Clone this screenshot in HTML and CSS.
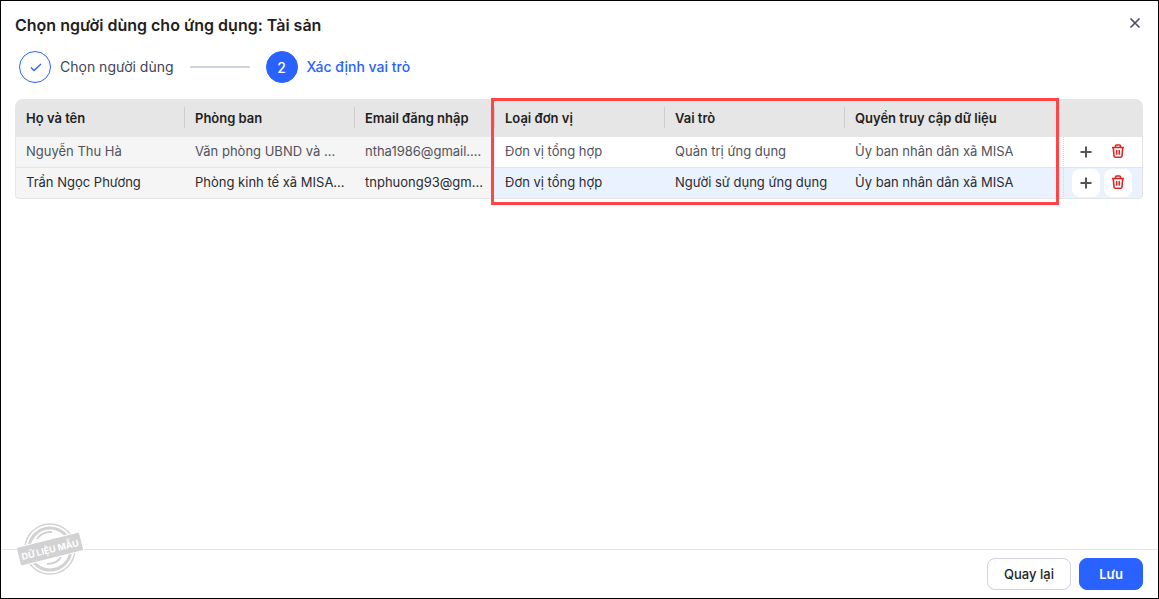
FILE: index.html
```html
<!DOCTYPE html>
<html lang="vi">
<head>
    <meta charset="UTF-8">
    <meta name="viewport" content="width=device-width, initial-scale=1.0">
    <title>Chọn người dùng cho ứng dụng: Tài sản</title>
    <link rel="stylesheet" href="styles.css">
</head>
<body>

    <div class="dialog">
        <header class="dialog-header">
            <h1>Chọn người dùng cho ứng dụng: Tài sản</h1>
            <button class="close-btn" type="button" aria-label="Đóng">
                <svg width="12" height="12" viewBox="0 0 12 12"><path d="M1.5 1.5l9 9M10.5 1.5l-9 9"/></svg>
            </button>
        </header>

        <ol class="steps">
            <li class="step done">
                <span class="step-circle">
                    <svg width="14" height="12" viewBox="0 0 14 12"><path d="M3 6.5l3 3L13 3"/></svg>
                </span>
                <span class="step-label">Chọn người dùng</span>
            </li>
            <li class="step-line" aria-hidden="true"></li>
            <li class="step active">
                <span class="step-circle">2</span>
                <span class="step-label">Xác định vai trò</span>
            </li>
        </ol>

        <main class="dialog-body">
            <div class="table-wrap">
                <table class="user-table">
                    <colgroup>
                        <col class="col-name">
                        <col class="col-dept">
                        <col class="col-email">
                        <col class="col-unit">
                        <col class="col-role">
                        <col>
                        <col class="col-actions">
                    </colgroup>
                    <thead>
                        <tr>
                            <th>Họ và tên</th>
                            <th>Phòng ban</th>
                            <th>Email đăng nhập</th>
                            <th>Loại đơn vị</th>
                            <th>Vai trò</th>
                            <th>Quyền truy cập dữ liệu</th>
                            <th></th>
                        </tr>
                    </thead>
                    <tbody>
                        <tr>
                            <td class="locked">Nguyễn Thu Hà</td>
                            <td class="locked">Văn phòng UBND và ...</td>
                            <td class="locked">ntha1986@gmail....</td>
                            <td>Đơn vị tổng hợp</td>
                            <td>Quản trị ứng dụng</td>
                            <td>Ủy ban nhân dân xã MISA</td>
                            <td class="actions">
                                <div class="action-group">
                                    <button class="icon-btn" type="button" aria-label="Thêm">
                                        <svg class="icon-add" width="12" height="12" viewBox="0 0 12 12"><path d="M6 .5v11M.5 6h11"/></svg>
                                    </button>
                                    <button class="icon-btn" type="button" aria-label="Xóa">
                                        <svg class="icon-trash" width="14" height="16" viewBox="0 0 14 16"><path d="M1 3.5h12M4.5 3.5V2q0-1 1-1h3q1 0 1 1v1.5M2.3 4l.7 8q.1 1.3 1.3 1.3h5.4q1.2 0 1.3-1.3l.7-8M5.7 6v4.8M8.3 6v4.8"/></svg>
                                    </button>
                                </div>
                            </td>
                        </tr>
                        <tr class="selected">
                            <td class="locked">Trần Ngọc Phương</td>
                            <td class="locked">Phòng kinh tế xã MISA...</td>
                            <td class="locked">tnphuong93@gm...</td>
                            <td>Đơn vị tổng hợp</td>
                            <td>Người sử dụng ứng dụng</td>
                            <td>Ủy ban nhân dân xã MISA</td>
                            <td class="actions">
                                <div class="action-group">
                                    <button class="icon-btn" type="button" aria-label="Thêm">
                                        <svg class="icon-add" width="12" height="12" viewBox="0 0 12 12"><path d="M6 .5v11M.5 6h11"/></svg>
                                    </button>
                                    <button class="icon-btn" type="button" aria-label="Xóa">
                                        <svg class="icon-trash" width="14" height="16" viewBox="0 0 14 16"><path d="M1 3.5h12M4.5 3.5V2q0-1 1-1h3q1 0 1 1v1.5M2.3 4l.7 8q.1 1.3 1.3 1.3h5.4q1.2 0 1.3-1.3l.7-8M5.7 6v4.8M8.3 6v4.8"/></svg>
                                    </button>
                                </div>
                            </td>
                        </tr>
                    </tbody>
                </table>
                <div class="highlight"></div>
            </div>
        </main>

        <footer class="dialog-footer">
            <button class="btn btn-secondary" type="button">Quay lại</button>
            <button class="btn btn-primary" type="button">Lưu</button>
        </footer>

        <svg class="stamp" width="68" height="56" viewBox="0 0 68 56">
            <g fill="none" stroke="#d2d2d2">
                <circle cx="33" cy="28" r="25" stroke-width="1.5"/>
                <circle cx="33" cy="28" r="21" stroke-width="3"/>
                <path d="M20 18q5-8 15-7M30 43q10 0 14-7" stroke-width="2"/>
            </g>
            <g transform="rotate(-14 33 28)">
                <rect x="0" y="18" width="66" height="20" fill="#fff"/>
                <rect x="1" y="19" width="64" height="18" rx="1" fill="#d2d2d2"/>
                <text x="33" y="32" text-anchor="middle">DỮ LIỆU MẪU</text>
            </g>
        </svg>
    </div>

</body>
</html>
```
FILE: styles.css
```css
* {
    margin: 0;
    padding: 0;
    box-sizing: border-box;
    font-family: "Inter", "Liberation Sans", sans-serif;
}

body {
    background: #fff;
    color: #1f1f1f;
    font-size: 13px;
}

.dialog {
    position: relative;
    display: flex;
    flex-direction: column;
    min-height: 100vh;
    border: 1px solid #000;
}

.dialog-header {
    display: flex;
    justify-content: space-between;
    align-items: flex-start;
    padding: 14px 15px 0 14px;
}

h1 {
    font-size: 16px;
    line-height: 20px;
    font-weight: 600;
}

.close-btn {
    display: flex;
    align-items: center;
    justify-content: center;
    width: 16px;
    height: 16px;
    border: none;
    background: none;
    cursor: pointer;
}

.close-btn path {
    stroke: #4b5160;
    stroke-width: 1.7;
}

.steps {
    display: flex;
    align-items: center;
    gap: 16px;
    padding: 16px 18px;
    list-style: none;
    font-size: 14px;
}

.step {
    display: flex;
    align-items: center;
    gap: 9px;
    color: #3f4454;
}

.step-label {
    padding-bottom: 2px;
}

.step.active {
    color: #2962ff;
    font-weight: 500;
}

.step-circle {
    display: flex;
    align-items: center;
    justify-content: center;
    width: 32px;
    height: 32px;
    border: 1px solid #2962ff;
    border-radius: 50%;
}

.step-circle path {
    fill: none;
    stroke: #2962ff;
    stroke-width: 1.3;
}

.active .step-circle {
    background: #2962ff;
    color: #fff;
}

.step-line {
    width: 60px;
    height: 2px;
    background: #d0d4dc;
}

.dialog-body {
    flex: 1;
    padding: 0 15px 0 14px;
}

.table-wrap {
    position: relative;
}

.user-table {
    width: 100%;
    table-layout: fixed;
    border-collapse: separate;
    border-spacing: 0;
    border-radius: 8px 8px 4px 4px;
    overflow: hidden;
}

.col-name,
.col-dept,
.col-unit {
    width: 170px;
}

.col-email {
    width: 140px;
}

.col-role {
    width: 180px;
}

.col-actions {
    width: 80px;
}

.user-table th {
    position: relative;
    height: 38px;
    padding: 0 10px;
    background: #e6e6e6;
    font-weight: 600;
    text-align: left;
    white-space: nowrap;
}

.user-table th:not(:nth-last-child(-n+2))::after {
    content: "";
    position: absolute;
    top: 8px;
    right: 0;
    width: 1px;
    height: 21px;
    background: #cdcdcd;
}

.user-table td {
    height: 31px;
    padding: 0 10px 2px;
    border-bottom: 1px solid #e2e4e9;
    color: #50535c;
    white-space: nowrap;
}

.user-table th:first-child {
    padding-left: 11px;
}

.user-table td:first-child {
    border-left: 1px solid #e2e4e9;
    border-bottom-left-radius: 4px;
}

.user-table tbody tr:first-child td {
    border-radius: 0;
}

.user-table td.locked {
    background: #f5f5f5;
}

.user-table .selected td {
    background: #ebf2ff;
    color: #2a2c33;
}

.user-table .selected td.locked {
    background: #f5f5f5;
}

.user-table td.actions {
    padding: 0 8px;
    border-left: 1px dotted #d5d8de;
    border-right: 1px solid #e2e4e9;
    border-bottom-right-radius: 4px;
}

.action-group {
    display: flex;
    gap: 4px;
}

.icon-btn {
    display: flex;
    align-items: center;
    justify-content: center;
    width: 28px;
    height: 28px;
    border: none;
    border-radius: 8px;
    background: #fff;
    cursor: pointer;
}

.icon-add path {
    stroke: #555;
    stroke-width: 2;
}

.icon-trash path {
    fill: none;
    stroke: #dc2626;
    stroke-width: 1.6;
}

.highlight {
    position: absolute;
    top: -1px;
    right: 84px;
    bottom: -6px;
    left: 476px;
    border: 3px solid #ff4545;
    pointer-events: none;
}

.dialog-footer {
    display: flex;
    justify-content: flex-end;
    gap: 8px;
    padding: 8px 15px;
    border-top: 1px solid #e2e4e9;
}

.btn {
    height: 32px;
    border: 1px solid #d0d2dc;
    border-radius: 8px;
    background: #fff;
    color: #1f1f1f;
    font-size: 13px;
    font-weight: 500;
    cursor: pointer;
}

.btn-secondary {
    min-width: 84px;
}

.btn-primary {
    min-width: 64px;
    border-color: #2962ff;
    background: #2962ff;
    color: #fff;
    font-weight: 600;
}

.stamp {
    position: absolute;
    bottom: 21px;
    left: 16px;
}

.stamp text {
    fill: #fff;
    font-size: 9px;
    font-weight: 700;
}
```
